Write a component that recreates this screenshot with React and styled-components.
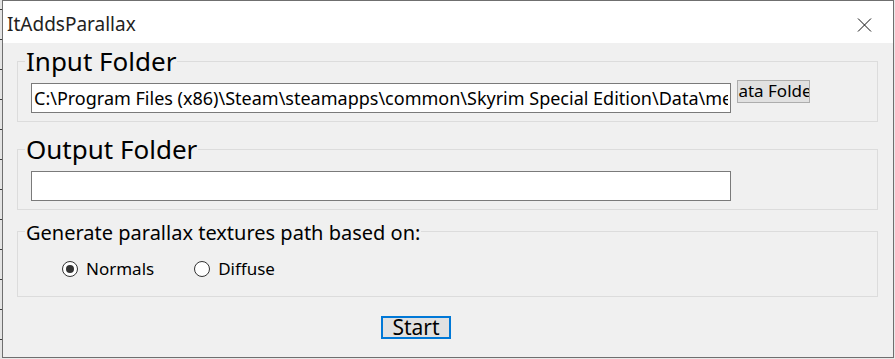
import React from "react";
import styled, { createGlobalStyle } from "styled-components";

const GlobalStyle = createGlobalStyle`
  html, body {
    margin: 0;
    padding: 0;
  }
  body {
    width: 895px;
    height: 359px;
    overflow: hidden;
    background: #e9e9e9;
    font-family: "Noto Sans", "Open Sans", sans-serif;
    color: #000;
  }
`;

const INPUT_PATH =
  "C:\\Program Files (x86)\\Steam\\steamapps\\common\\Skyrim Special Edition\\Data\\meshes";

export default function App() {
  return (
    <>
      <GlobalStyle />
      <Desktop>
        <Strip />
        <Window>
          <TitleBar>
            <Title>ItAddsParallax</Title>
            <CloseButton aria-label="Close">
              <svg width="15" height="14" viewBox="0 0 15 14">
                <path d="M1 0.5 L14 13.5 M14 0.5 L1 13.5" stroke="#111" strokeWidth="1" fill="none" />
              </svg>
            </CloseButton>
          </TitleBar>

          <Client>
            <Group $gap={2}>
              <BigLegend>Input Folder</BigLegend>
              <Row>
                <TextBox value={INPUT_PATH} readOnly />
                <BrowseButton>
                  <Clipped>Data Folder</Clipped>
                </BrowseButton>
              </Row>
            </Group>

            <Group $gap={11}>
              <BigLegend>Output Folder</BigLegend>
              <Row>
                <TextBox value="" readOnly />
              </Row>
            </Group>

            <Group $gap={9}>
              <SmallLegend>Generate parallax textures path based on:</SmallLegend>
              <Radios>
                <RadioOption>
                  <RadioDot $checked />
                  Normals
                </RadioOption>
                <RadioOption>
                  <RadioDot />
                  Diffuse
                </RadioOption>
              </Radios>
            </Group>

            <Footer>
              <StartButton>Start</StartButton>
            </Footer>
          </Client>
        </Window>
      </Desktop>
    </>
  );
}

const Desktop = styled.div`
  display: flex;
  width: 895px;
  height: 359px;
`;

const Strip = styled.div`
  width: 2px;
  height: 359px;
  background: repeating-linear-gradient(
    to bottom,
    #e4e4e4 0px,
    #e4e4e4 9px,
    #3a3a3a 9px,
    #3a3a3a 10px,
    #e4e4e4 10px,
    #e4e4e4 30px
  );
`;

const Window = styled.div`
  width: 892px;
  height: 358px;
  box-sizing: border-box;
  border: 1px solid #6f6f6f;
  display: flex;
  flex-direction: column;
  background: #f0f0f0;
`;

const TitleBar = styled.div`
  height: 42px;
  flex-shrink: 0;
  background: #fff;
  display: flex;
  align-items: center;
  justify-content: space-between;
  padding: 0 21px 0 4px;
`;

const Title = styled.span`
  font-size: 19px;
  line-height: 24px;
  color: #222;
  padding-top: 3px;
`;

const CloseButton = styled.div`
  display: flex;
  align-items: center;
  padding-top: 5px;
`;

const Client = styled.div`
  flex: 1;
  padding: 0 15px 0 14px;
  display: flex;
  flex-direction: column;
`;

const Group = styled.fieldset`
  margin: ${(p) => p.$gap}px 0 0 0;
  padding: 0 12px 8px 13px;
  border: 1px solid #dcdcdc;
  min-width: 0;
`;

const BigLegend = styled.legend`
  margin-left: -6px;
  padding: 0 1px;
  font-size: 26px;
  line-height: 32px;
  color: #000;
`;

const SmallLegend = styled.legend`
  margin-left: -6px;
  padding: 3px 1px 0 1px;
  font-size: 20px;
  line-height: 22px;
  color: #000;
`;

const Row = styled.div`
  display: flex;
  align-items: flex-start;
  gap: 6px;
  padding-top: 3px;
`;

const TextBox = styled.input`
  width: 700px;
  height: 30px;
  margin-top: 3px;
  box-sizing: border-box;
  border: 1px solid #7a7a7a;
  background: #fff;
  padding: 0 2px;
  font-family: "Noto Sans", "Open Sans", sans-serif;
  font-size: 18px;
  color: #000;
  outline: none;
`;

const BrowseButton = styled.div`
  width: 73px;
  height: 23px;
  box-sizing: border-box;
  border: 1px solid #adadad;
  background: #e1e1e1;
  overflow: hidden;
  white-space: nowrap;
  font-size: 17px;
  line-height: 20px;
`;

const Clipped = styled.span`
  display: block;
  margin-left: -12px;
`;

const Radios = styled.div`
  display: flex;
  gap: 40px;
  padding: 14px 0 8px 31px;
`;

const RadioOption = styled.label`
  display: flex;
  align-items: center;
  gap: 8px;
  font-size: 17px;
  line-height: 22px;
`;

const RadioDot = styled.span`
  width: 16px;
  height: 16px;
  box-sizing: border-box;
  border-radius: 50%;
  border: 1px solid #333;
  background: #fff;
  display: flex;
  align-items: center;
  justify-content: center;

  &::after {
    content: "";
    width: 8px;
    height: 8px;
    border-radius: 50%;
    background: ${(p) => (p.$checked ? "#333" : "transparent")};
  }
`;

const Footer = styled.div`
  padding: 19px 0 0 364px;
`;

const StartButton = styled.div`
  width: 70px;
  height: 23px;
  box-sizing: border-box;
  border: 2px solid #0078d7;
  background: #e1e1e1;
  display: flex;
  align-items: center;
  justify-content: center;
  font-size: 21px;
  line-height: 19px;
`;
